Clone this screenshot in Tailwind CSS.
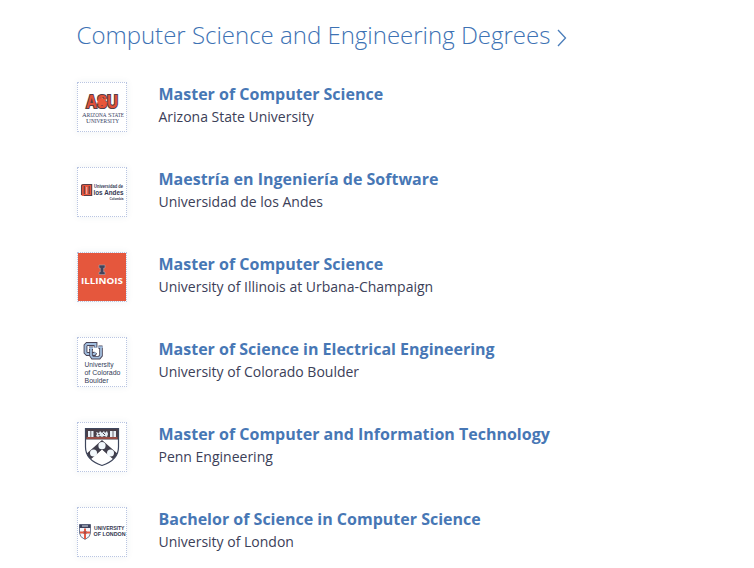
<!DOCTYPE html>
<html lang="en">
<head>
<meta charset="utf-8">
<title>Computer Science and Engineering Degrees</title>
<script src="https://cdn.jsdelivr.net/npm/@tailwindcss/browser@4"></script>
</head>
<body class="bg-white font-['Open_Sans',sans-serif]">
<main class="h-[568px] overflow-hidden pl-[77px] pt-[17px]">
  <h1 class="-ml-[0.5px] flex h-9 items-center text-[24px] leading-9 font-light whitespace-nowrap text-[#3d72b4]">
    <span>Computer Science and Engineering Degrees</span>
    <svg class="ml-[7px] mt-[5px] h-[18px] w-[10px]" viewBox="0 0 10 18" fill="none" stroke="#4a7dba" stroke-width="1.3"><path d="M1 1 8.5 9 1 17"/></svg>
  </h1>
  <ul class="mt-[29px] flex flex-col gap-[35px]">
    <li class="flex h-[50px] gap-[31.5px]">
      <div class="size-[50px] shrink-0 border border-dotted border-[#b9c5e2] bg-white shadow-[0_0_7px_rgba(40,80,110,0.07)]">
        <svg class="size-12 overflow-visible" viewBox="0 0 48 48" font-family="Liberation Serif">
          <text x="8" y="25" font-family="Liberation Sans" font-weight="700" font-size="18" textLength="32" lengthAdjust="spacingAndGlyphs" fill="#df5138" stroke="#553d46" stroke-width="2.2" paint-order="stroke">ASU</text>
          <path d="m19 17 3-1 2-3 1 3 4-1-2 3 3 2-3 1v3l-3-2-3 2v-3l-3-1 2-1z" fill="#e9563a"/>
          <text x="4" y="33.5" font-size="6.6" fill="#35415f" textLength="42" lengthAdjust="spacingAndGlyphs">A<tspan font-size="5.2">RIZONA</tspan> S<tspan font-size="5.2">TATE</tspan></text>
          <text x="8" y="39.5" font-size="6.6" fill="#35415f" textLength="33" lengthAdjust="spacingAndGlyphs">U<tspan font-size="5.2">NIVERSITY</tspan></text>
        </svg>
      </div>
      <div class="whitespace-nowrap"><h2 class="text-[16px] leading-6 font-bold text-[#4777b5]">Master of Computer Science</h2><p class="text-[14px] leading-[21px] text-[#3b4058]">Arizona State University</p></div>
    </li>
    <li class="flex h-[50px] gap-[31.5px]">
      <div class="size-[50px] shrink-0 border border-dotted border-[#b9c5e2] bg-white shadow-[0_0_7px_rgba(40,80,110,0.07)]">
        <svg class="size-12 overflow-visible" viewBox="0 0 48 48" font-family="Liberation Sans" font-weight="700" fill="#343852">
          <path d="M3 18q0-2 3-2h8v12H6q-3 0-3-2z" fill="#e9563d"/>
          <path d="M3.5 27V18q0-1.5 2.5-1.5h7.7v11H6M6.3 18v8M11.2 18v8" fill="none" stroke="#583f47" stroke-width="1.1"/>
          <path d="M8.7 19v7" stroke="#f4d3cd" stroke-width=".8"/>
          <text x="16" y="20.3" font-size="4.8" textLength="29" lengthAdjust="spacingAndGlyphs">Universidad de</text>
          <text x="15.5" y="27" font-size="7.6" textLength="30" lengthAdjust="spacingAndGlyphs">los Andes</text>
          <text x="31.5" y="32" font-size="4" textLength="14" lengthAdjust="spacingAndGlyphs">Colombia</text>
        </svg>
      </div>
      <div class="whitespace-nowrap"><h2 class="text-[16px] leading-6 font-bold text-[#4777b5]">Maestría en Ingeniería de Software</h2><p class="text-[14px] leading-[21px] text-[#3b4058]">Universidad de los Andes</p></div>
    </li>
    <li class="flex h-[50px] gap-[31.5px]">
      <div class="size-[50px] shrink-0 border border-dotted border-[#b9c5e2] bg-[#e5573d] bg-clip-padding shadow-[0_0_7px_rgba(40,80,110,0.07)]">
        <svg class="size-12 overflow-visible" viewBox="0 0 48 48">
          <path d="M21 12h6v3h-1.3v4H27v2.5h-6V19h1.3v-4H21z" fill="#41435a" stroke="#aaa4b0" stroke-width=".6"/>
          <text x="3" y="31" font-family="Open Sans" font-weight="700" font-size="8" fill="#fff" textLength="42" lengthAdjust="spacingAndGlyphs">ILLINOIS</text>
        </svg>
      </div>
      <div class="whitespace-nowrap"><h2 class="text-[16px] leading-6 font-bold text-[#4777b5]">Master of Computer Science</h2><p class="text-[14px] leading-[21px] text-[#3b4058]">University of Illinois at Urbana-Champaign</p></div>
    </li>
    <li class="flex h-[50px] gap-[31.5px]">
      <div class="size-[50px] shrink-0 border border-dotted border-[#b9c5e2] bg-white shadow-[0_0_7px_rgba(40,80,110,0.07)]">
        <svg class="size-12 overflow-visible" viewBox="0 0 48 48" font-family="Liberation Sans" font-size="7.2" fill="#343b58">
          <g fill="none">
            <path d="M17.5 9.5V6H9L7.5 7.5v7L9 16h7.5l1-1.5" stroke="#4a4558" stroke-width="3.8"/><path d="M17.5 9.5V6H9L7.5 7.5v7L9 16h7.5l1-1.5" stroke="#a3bfdf" stroke-width="1.9"/>
            <path d="M11 10.2h4M13 10.5v7l1.5 2.2h6.7l1.8-2.2V10M20.5 9.2h4" stroke="#4a4558" stroke-width="3.6"/><path d="M11 10.2h4M13 10.5v7l1.5 2.2h6.7l1.8-2.2V10M20.5 9.2h4" stroke="#a3bfdf" stroke-width="1.8"/>
          </g>
          <text x="6.5" y="29" textLength="29" lengthAdjust="spacingAndGlyphs">University</text>
          <text x="6.5" y="37" textLength="36" lengthAdjust="spacingAndGlyphs">of Colorado</text>
          <text x="6.5" y="45" textLength="24" lengthAdjust="spacingAndGlyphs">Boulder</text>
        </svg>
      </div>
      <div class="whitespace-nowrap"><h2 class="text-[16px] leading-6 font-bold text-[#4777b5]">Master of Science in Electrical Engineering</h2><p class="text-[14px] leading-[21px] text-[#3b4058]">University of Colorado Boulder</p></div>
    </li>
    <li class="flex h-[50px] gap-[31.5px]">
      <div class="size-[50px] shrink-0 border border-dotted border-[#b9c5e2] bg-white shadow-[0_0_7px_rgba(40,80,110,0.07)]">
        <svg class="size-12" viewBox="0 0 48 48">
          <defs><clipPath id="shield"><path d="M7.5 5.5h33V24q0 13-16.5 18.5Q7.5 37 7.5 24z"/></clipPath></defs>
          <g clip-path="url(#shield)">
            <path d="M7 5h34v11.5H7z" fill="#493f49"/><path d="M8.5 14.5h31v1h-31z" fill="#e65840"/>
            <path d="M10 8h5.5v6H10zM32 8h6v6h-6z" fill="#e9f0f7"/><path d="M12.8 8v6M35 8v6" stroke="#493f49" stroke-width=".8"/>
            <path d="m18 13 1-2-1-2 3 1 1-2 2 2 2-2 1 2 2-2 1 3-1 3-3-1-2 1-2-1-2 1z" fill="#e5edf4"/><path d="m20 11 2 1m3-2 2 2" stroke="#493f49"/>
            <path d="M7 32 24 17l17 15v9L24 27 7 41z" fill="#413f4c"/><path d="M24 26.5 34 36l-10 8-10-8z" fill="#fff"/>
            <g fill="#f2f8fc"><circle cx="24" cy="22.7" r="3.6"/><circle cx="15.5" cy="30" r="3.5"/><circle cx="32.5" cy="30" r="3.5"/></g>
          </g>
          <path d="M7.5 5.5h33V24q0 13-16.5 18.5Q7.5 37 7.5 24z" fill="none" stroke="#3e465c" stroke-width="1.2"/>
        </svg>
      </div>
      <div class="whitespace-nowrap"><h2 class="text-[16px] leading-6 font-bold text-[#4777b5]">Master of Computer and Information Technology</h2><p class="text-[14px] leading-[21px] text-[#3b4058]">Penn Engineering</p></div>
    </li>
    <li class="flex h-[50px] gap-[31.5px]">
      <div class="size-[50px] shrink-0 border border-dotted border-[#b9c5e2] bg-white shadow-[0_0_7px_rgba(40,80,110,0.07)]">
        <svg class="size-12 overflow-visible" viewBox="0 0 48 48" font-family="Liberation Sans" font-weight="700" font-size="5.6" fill="#333750">
          <path d="M1.5 16.5h11V25q0 4-5.5 6.5Q1.5 29 1.5 25z" fill="#f4f6fb" stroke="#505e7c" stroke-width=".8"/>
          <path d="M1.5 16.5h11V20h-11z" fill="#3c405b"/><path d="M4 18h6" stroke="#d9e2ec"/>
          <path d="M7 20.5V31M2 24.5h10" stroke="#e45a45" stroke-width="2"/><path d="m5.5 23 3 3m0-3-3 3" stroke="#77404c" stroke-width=".8"/>
          <text x="16" y="21.5" textLength="30.5" lengthAdjust="spacingAndGlyphs">UNIVERSITY</text>
          <text x="15.5" y="27.7" textLength="32" lengthAdjust="spacingAndGlyphs">OF LONDON</text>
        </svg>
      </div>
      <div class="whitespace-nowrap"><h2 class="text-[16px] leading-6 font-bold text-[#4777b5]">Bachelor of Science in Computer Science</h2><p class="text-[14px] leading-[21px] text-[#3b4058]">University of London</p></div>
    </li>
  </ul>
</main>
</body>
</html>
